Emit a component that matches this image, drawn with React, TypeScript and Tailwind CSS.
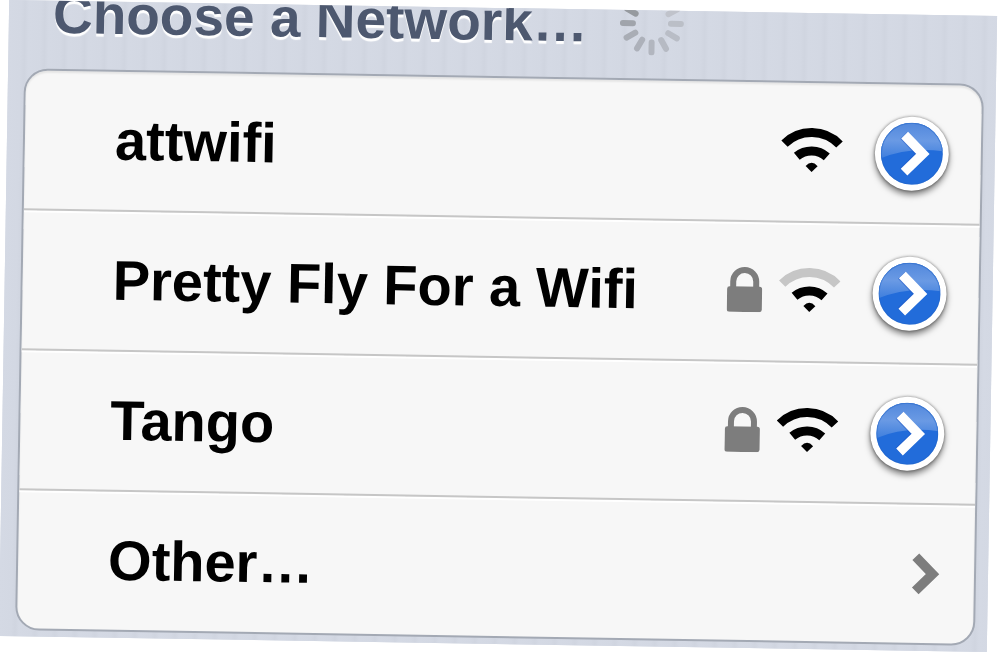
import React, { useId } from 'react';

type Network = {
  name: string;
  locked: boolean;
  strong: boolean;
};

const networks: Network[] = [
  { name: 'attwifi', locked: false, strong: true },
  { name: 'Pretty Fly For a Wifi', locked: true, strong: false },
  { name: 'Tango', locked: true, strong: true },
];

// Clockwise from the top
const spokes = [
  '#8f9398', '#c3c6cd', '#c0c3cb', '#bbbfc7', '#b9bdc6', '#b6bac3',
  '#b2b6bf', '#adb1ba', '#a9adb5', '#a0a4ab', '#969a9f', '#92969b',
];

const Spinner = () => (
  <svg className="h-16 w-16 shrink-0" viewBox="0 0 64 64" aria-hidden="true">
    {spokes.map((color, i) => (
      <line
        key={i}
        x1="32"
        y1="3"
        x2="32"
        y2="13"
        stroke={color}
        strokeWidth="6"
        strokeLinecap="round"
        transform={`rotate(${i * 30} 32 32)`}
      />
    ))}
  </svg>
);

const LockIcon = () => (
  <svg className="h-[45px] w-9 shrink-0" viewBox="0 0 36 45" role="img" aria-label="Secured">
    <path d="M6.5 22V14.5a11.5 11.5 0 0 1 23 0V22" fill="none" stroke="#7d7d7d" strokeWidth="6" />
    <rect x="0.5" y="19.5" width="35" height="25.5" rx="2.5" fill="#7d7d7d" />
  </svg>
);

const WifiIcon = ({ strong }: { strong: boolean }) => (
  <svg className="h-11 w-[62px] shrink-0" viewBox="0 0 62 44" role="img" aria-label="Signal strength">
    <path
      d="M3.5 16A38.6 38.6 0 0 1 58.5 16"
      fill="none"
      stroke={strong ? '#000' : '#c6c6c6'}
      strokeWidth="9"
    />
    <path d="M16 28.500A23 23 0 0 1 46 28.500" fill="none" stroke="#000" strokeWidth="9" />
    <path d="M25 38Q31 31.500 37 38L31 44Z" fill="#000" />
  </svg>
);

const DetailButton = ({ name }: { name: string }) => {
  const id = useId();

  return (
    <button
      type="button"
      aria-label={`Details for ${name}`}
      className="h-[74px] w-[74px] shrink-0 rounded-full bg-white p-[6px] shadow-[0_4px_6px_rgba(0,0,0,0.5),0_0_3px_rgba(0,0,0,0.45)]"
    >
      <svg className="h-full w-full" viewBox="0 0 62 62">
        <defs>
          <linearGradient id={`${id}gloss`} x1="0" y1="0" x2="0" y2="1">
            <stop offset="0" stopColor="#5288dc" />
            <stop offset="0.5" stopColor="#6a9ae4" />
            <stop offset="1" stopColor="#3f7fdd" />
          </linearGradient>
          <clipPath id={`${id}disc`}>
            <circle cx="31" cy="31" r="31" />
          </clipPath>
        </defs>
        <g clipPath={`url(#${id}disc)`}>
          <rect width="62" height="62" fill="#226cda" />
          <path d="M0 0H62V28Q28 24 0 36Z" fill={`url(#${id}gloss)`} />
        </g>
        <circle cx="31" cy="31" r="30.5" fill="none" stroke="#2465c8" strokeOpacity="0.5" />
        <path d="M22.500 13L40.500 31L22.500 49" fill="none" stroke="#2157c4" strokeOpacity="0.5" strokeWidth="9.5" />
        <path d="M23.500 12.500L42 31L23.500 49.500" fill="none" stroke="#fff" strokeWidth="9.5" />
      </svg>
    </button>
  );
};

const App = () => {
  return (
    <main className="overflow-hidden bg-white pt-2 pr-2 pb-[10px] pl-1 font-['Liberation_Sans',Arial,sans-serif] font-bold">
      <section className="rotate-[0.93deg] overflow-hidden bg-[#d3d8e3] bg-[repeating-linear-gradient(90deg,#d4d9e4_0px,#d3d8e3_12px,#d0d5e0_16px,#d4d9e4_20px)] pr-3 pb-[6px] pl-4">
        <header className="flex h-[26px] items-center gap-8 pl-7 text-[#4d586f]">
          <h1 className="text-[55px] leading-none whitespace-nowrap [text-shadow:0_3px_1px_#fff]">
            Choose a Network…
          </h1>
          <Spinner />
        </header>

        <ul className="mt-[42px] overflow-hidden rounded-[24px] border-2 border-[#a3a9b4] bg-[#f7f7f7] text-[56px] leading-none text-black shadow-[inset_0_2px_2px_rgba(0,0,0,0.08)]">
          {networks.map((network) => (
            <li
              key={network.name}
              className="flex h-[140px] items-center border-b-2 border-[#c6c6c6] pr-8 pl-[90px] shadow-[0_2px_0_#fff]"
            >
              <span className="flex-1 whitespace-nowrap">{network.name}</span>
              <span className="mr-8 flex items-center gap-4 pb-1">
                {network.locked && <LockIcon />}
                <WifiIcon strong={network.strong} />
              </span>
              <DetailButton name={network.name} />
            </li>
          ))}
          <li>
            <button type="button" className="flex h-[138px] w-full items-center pr-8 pl-[90px] text-left">
              <span className="flex-1">Other…</span>
              <svg className="h-[42px] w-8" viewBox="0 0 32 42" aria-hidden="true">
                <path d="M5.500 4L22.500 21L5.500 38" fill="none" stroke="#7d7d7d" strokeWidth="9.5" />
              </svg>
            </button>
          </li>
        </ul>
      </section>
    </main>
  );
};

export default App;
